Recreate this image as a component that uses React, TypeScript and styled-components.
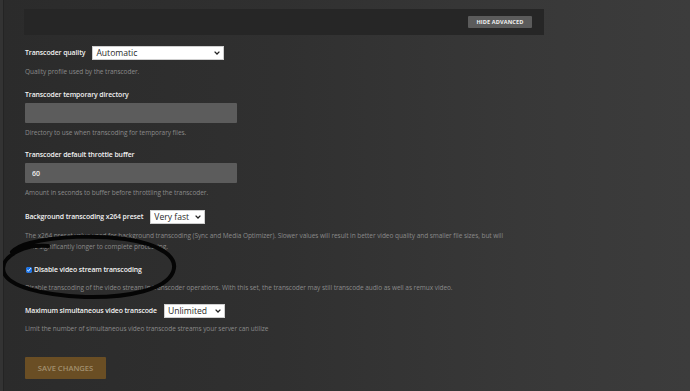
import React, { useState } from 'react'
import styled, { createGlobalStyle } from 'styled-components'

const GlobalStyle = createGlobalStyle`
  html, body {
    margin: 0;
    padding: 0;
    background: #2c2c2c;
  }
  body {
    font-family: 'Open Sans', 'Liberation Sans', sans-serif;
  }
`

const Chevron = () => (
  <svg width='6' height='4' viewBox='0 0 6 4'>
    <path d='M0.6 0.6 L3 3 L5.4 0.6' fill='none' stroke='#222' strokeWidth='1.3' />
  </svg>
)

interface SelectProps {
  value: string
  width: number
  options: string[]
}

const SelectBox = ({ value, width, options }: SelectProps) => (
  <S.SelectWrap $width={width}>
    <S.Select defaultValue={value}>
      {options.map(o => (
        <option key={o}>{o}</option>
      ))}
    </S.Select>
    <S.ChevronSpot>
      <Chevron />
    </S.ChevronSpot>
  </S.SelectWrap>
)

export default function App() {
  const [disableVideo, setDisableVideo] = useState(true)

  return (
    <S.Page>
      <GlobalStyle />
      <S.AdvancedBar>
        <S.SmallButton type='button'>Hide Advanced</S.SmallButton>
      </S.AdvancedBar>

      <S.Group $top={11}>
        <S.InlineRow>
          <S.Label>Transcoder quality</S.Label>
          <SelectBox value='Automatic' width={132} options={['Automatic', 'Prefer higher speed encoding', 'Prefer higher quality encoding']} />
        </S.InlineRow>
        <S.Help $top={6}>Quality profile used by the transcoder.</S.Help>
      </S.Group>

      <S.Group $top={13}>
        <S.Label>Transcoder temporary directory</S.Label>
        <S.TextInput defaultValue='' />
        <S.Help $top={4}>Directory to use when transcoding for temporary files.</S.Help>
      </S.Group>

      <S.Group $top={12}>
        <S.Label>Transcoder default throttle buffer</S.Label>
        <S.TextInput defaultValue='60' />
        <S.Help $top={4}>Amount in seconds to buffer before throttling the transcoder.</S.Help>
      </S.Group>

      <S.Group $top={12}>
        <S.InlineRow>
          <S.Label>Background transcoding x264 preset</S.Label>
          <SelectBox value='Very fast' width={55} options={['Very fast', 'Faster', 'Fast', 'Medium', 'Slow']} />
        </S.InlineRow>
        <S.Help $top={6}>
          The x264 preset value used for background transcoding (Sync and Media Optimizer). Slower values will result in better video quality and smaller file sizes, but will
          take significantly longer to complete processing.
        </S.Help>
      </S.Group>

      <S.Group $top={13}>
        <S.CheckRow>
          <S.Check type='checkbox' checked={disableVideo} onChange={e => setDisableVideo(e.target.checked)} />
          <S.Label>Disable video stream transcoding</S.Label>
        </S.CheckRow>
        <S.Help $top={7}>
          Disable transcoding of the video stream in transcoder operations. With this set, the transcoder may still transcode audio as well as remux video.
        </S.Help>
      </S.Group>

      <S.Group $top={11}>
        <S.InlineRow>
          <S.Label>Maximum simultaneous video transcode</S.Label>
          <SelectBox value='Unlimited' width={61} options={['Unlimited', '1', '2', '3', '4']} />
        </S.InlineRow>
        <S.Help $top={5}>Limit the number of simultaneous video transcode streams your server can utilize</S.Help>
      </S.Group>

      <S.SaveButton type='button'>Save Changes</S.SaveButton>

      <S.Scribble width='690' height='391' viewBox='0 0 690 391'>
        <path
          d='M48 246 C36 245 26 247 18 251 C6 257 1 265 4 273 C9 286 40 295 85 297 C130 298 166 289 173 272 C179 257 160 244 125 239 C95 235 58 236 30 243 C22 245 16 248 12 252'
          fill='none'
          stroke='#050505'
          strokeWidth='4'
          strokeLinecap='round'
        />
      </S.Scribble>
    </S.Page>
  )
}

const S = {
  Page: styled.div`
    position: relative;
    box-sizing: border-box;
    width: 690px;
    height: 391px;
    overflow: hidden;
    padding: 9px 0 0 22px;
    display: flex;
    flex-direction: column;
    align-items: flex-start;
    background: linear-gradient(90deg, #2b2b2b 0%, #303030 40%, #383838 75%, #3c3c3c 100%);
    border-left: 3px solid #333;
    box-shadow: inset 1px 0 0 #242424;
  `,
  AdvancedBar: styled.div`
    box-sizing: border-box;
    width: 520px;
    height: 26px;
    margin-left: -1px;
    padding-right: 12px;
    background: #262626;
    display: flex;
    align-items: center;
    justify-content: flex-end;
  `,
  SmallButton: styled.button`
    width: 64px;
    height: 12px;
    padding: 0;
    border: none;
    border-radius: 1px;
    background: #5b5b5b;
    color: #f0f0f0;
    font-family: 'Open Sans', 'Liberation Sans', sans-serif;
    font-weight: 700;
    font-size: 5.6px;
    letter-spacing: 0.1px;
    text-transform: uppercase;
    line-height: 12px;
  `,
  Group: styled.div<{ $top: number }>`
    margin-top: ${p => p.$top}px;
    display: flex;
    flex-direction: column;
    align-items: flex-start;
  `,
  InlineRow: styled.div`
    display: flex;
    align-items: center;
    gap: 7px;
    height: 14px;
  `,
  CheckRow: styled.label`
    display: flex;
    align-items: center;
    gap: 2px;
    height: 10px;
  `,
  Label: styled.span`
    font-size: 6.9px;
    font-weight: 600;
    line-height: 10px;
    color: #f2f2f2;
    letter-spacing: -0.1px;
    white-space: nowrap;
  `,
  Help: styled.div<{ $top: number }>`
    margin-top: ${p => p.$top}px;
    max-width: 484px;
    font-size: 6.5px;
    line-height: 11px;
    color: #8a8a8a;
    letter-spacing: -0.05px;
  `,
  SelectWrap: styled.div<{ $width: number }>`
    position: relative;
    width: ${p => p.$width}px;
    height: 14px;
    line-height: 0;
  `,
  Select: styled.select`
    display: block;
    appearance: none;
    box-sizing: border-box;
    width: 100%;
    height: 14px;
    margin: 0;
    padding: 0 10px 0 3px;
    border: 1px solid #cfcfcf;
    border-radius: 0;
    background: #ffffff;
    color: #2a2a2a;
    font-family: 'Open Sans', 'Liberation Sans', sans-serif;
    font-size: 8.6px;
    line-height: 12px;
    outline: none;
  `,
  ChevronSpot: styled.span`
    position: absolute;
    right: 4px;
    top: 5px;
    display: flex;
    pointer-events: none;
  `,
  TextInput: styled.input`
    box-sizing: border-box;
    width: 212px;
    height: 20px;
    margin-top: 3px;
    padding: 0 7px;
    border: none;
    border-radius: 1px;
    background: #5c5c5c;
    color: #f0f0f0;
    font-family: 'Open Sans', 'Liberation Sans', sans-serif;
    font-size: 7px;
    font-weight: 600;
    outline: none;
  `,
  Check: styled.input`
    width: 6px;
    height: 6px;
    margin: 0 0 0 1px;
    accent-color: #1a73e8;
  `,
  SaveButton: styled.button`
    margin-top: 23px;
    width: 81px;
    height: 22px;
    padding: 0;
    border: none;
    border-radius: 1px;
    background: #6a4e24;
    color: #a2906f;
    font-family: 'Open Sans', 'Liberation Sans', sans-serif;
    font-weight: 600;
    font-size: 7.6px;
    text-transform: uppercase;
  `,
  Scribble: styled.svg`
    position: absolute;
    left: -3px;
    top: 0;
    pointer-events: none;
  `
}
